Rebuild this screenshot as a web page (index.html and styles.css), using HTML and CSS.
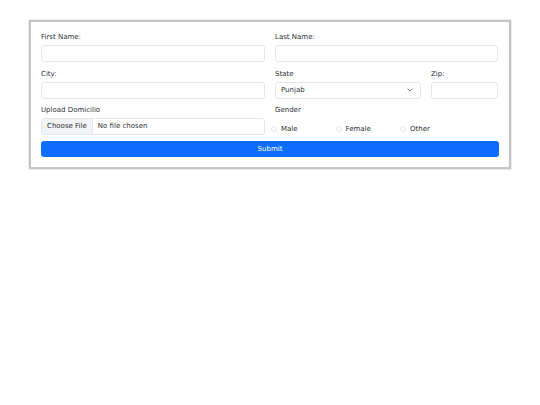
FILE: index.html
```html
<!DOCTYPE html>
<html lang="en">
<head>
<meta charset="utf-8">
<title>Form</title>
<link rel="stylesheet" href="styles.css">
</head>
<body>
<div class="page">
  <form class="card">
    <div class="row">
      <div class="field half">
        <label class="label">First Name:</label>
        <div class="input"></div>
      </div>
      <div class="field half">
        <label class="label">Last Name:</label>
        <div class="input"></div>
      </div>
    </div>
    <div class="row">
      <div class="field half">
        <label class="label">City:</label>
        <div class="input"></div>
      </div>
      <div class="field state">
        <label class="label">State</label>
        <div class="input select">
          <span>Punjab</span>
          <svg class="chev" width="6" height="4" viewBox="0 0 16 10"><path d="M2 2l6 6 6-6" fill="none" stroke="#495057" stroke-width="2" stroke-linecap="round" stroke-linejoin="round"/></svg>
        </div>
      </div>
      <div class="field zip">
        <label class="label">Zip:</label>
        <div class="input"></div>
      </div>
    </div>
    <div class="row">
      <div class="field half">
        <label class="label">Upload Domicilio</label>
        <div class="input file">
          <span class="file-btn">Choose File</span>
          <span class="file-text">No file chosen</span>
        </div>
      </div>
      <div class="field half">
        <label class="label">Gender</label>
        <div class="radios">
          <span class="radio"><span class="dot"></span>Male</span>
          <span class="radio"><span class="dot"></span>Female</span>
          <span class="radio"><span class="dot"></span>Other</span>
        </div>
      </div>
    </div>
    <div class="submit">Submit</div>
  </form>
</div>
</body>
</html>
```
FILE: styles.css
```css
* { box-sizing: border-box; }
html, body { margin: 0; padding: 0; background: #fff; }
body {
  font-family: "DejaVu Sans", "Noto Sans", sans-serif;
  font-size: 7px;
  line-height: 10.5px;
  color: #2b2f33;
}
.page { padding: 20px 29px; }
.card {
  width: 482px;
  border: 2px solid #c4c4c4;
  box-shadow: 0 0 0 0.5px #d8d8d8;
  padding: 9px 10px 9.5px 10px;
  display: flex;
  flex-direction: column;
  gap: 5.5px;
}
.row { display: flex; gap: 10px; }
.field { display: flex; flex-direction: column; }
.half { width: 224px; flex: 0 0 auto; }
.row .half + .half { width: 223px; }
.state { width: 146px; }
.zip { width: 67px; }
.label { display: block; line-height: 12px; margin-bottom: 2px; }
.input {
  height: 17px;
  border: 1px solid #e3e6ea;
  border-radius: 3px;
  background: #fff;
}
.select {
  display: flex;
  align-items: center;
  justify-content: space-between;
  padding: 0 7px 0 5px;
}
.chev { display: block; }
.file { display: flex; align-items: stretch; overflow: hidden; }
.file-btn {
  background: #f1f3f5;
  border-right: 1px solid #e3e6ea;
  padding: 0 5px;
  display: flex;
  align-items: center;
}
.file-text { display: flex; align-items: center; padding-left: 5px; }
.radios {
  display: flex;
  height: 17px;
  padding-top: 5px;
  align-items: center;
  margin-left: -4px;
}
.radio {
  display: flex;
  align-items: center;
  width: 64.5px;
}
.dot {
  width: 6px;
  height: 6px;
  border: 1px solid #e3e6ea;
  border-radius: 50%;
  margin-right: 4px;
}
.submit {
  margin-top: 0.5px;
  height: 16px;
  background: #0d6efd;
  color: #fff;
  border-radius: 3px;
  display: flex;
  align-items: center;
  justify-content: center;
}
```
